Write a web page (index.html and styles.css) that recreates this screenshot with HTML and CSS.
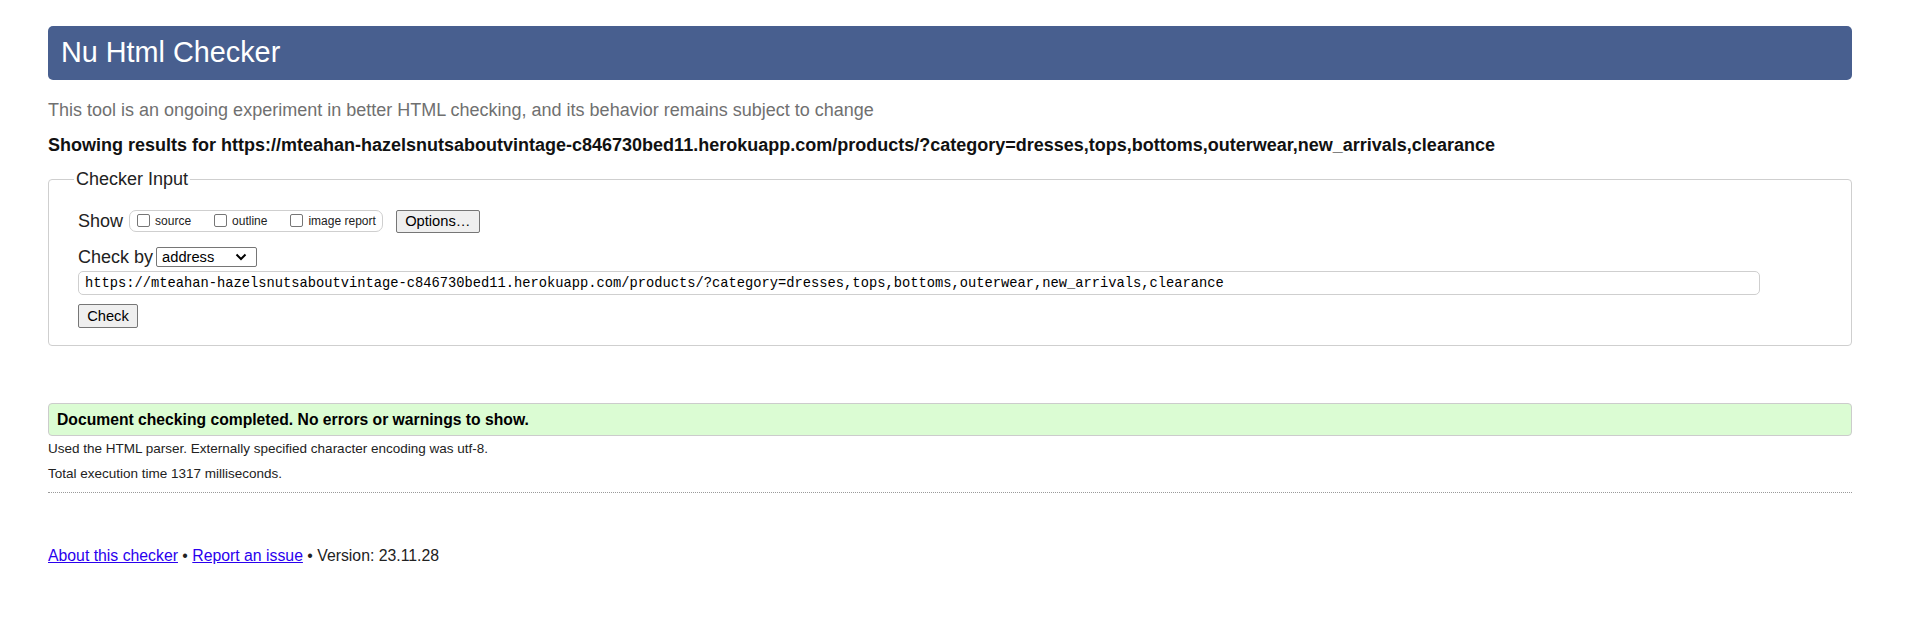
FILE: index.html
```html
<!DOCTYPE html>
<html lang="en">
<head>
<meta charset="utf-8">
<title>Nu Html Checker</title>
<link rel="stylesheet" href="styles.css">
</head>
<body>
<h1 class="title">Nu Html Checker</h1>
<p class="intro">This tool is an ongoing experiment in better HTML checking, and its behavior remains subject to change</p>
<p class="results">Showing results for https://mteahan-hazelsnutsaboutvintage-c846730bed11.herokuapp.com/products/?category=dresses,tops,bottoms,outerwear,new_arrivals,clearance</p>
<fieldset class="checker">
  <legend class="checker-legend">Checker Input</legend>
  <div class="show-row">
    <span class="row-label">Show</span>
    <div class="show-box">
      <label class="opt"><input type="checkbox" class="cb"><span>source</span></label>
      <label class="opt"><input type="checkbox" class="cb"><span>outline</span></label>
      <label class="opt"><input type="checkbox" class="cb"><span>image report</span></label>
    </div>
    <button type="button" class="btn btn-options">Options…</button>
  </div>
  <div class="by-row">
    <span class="row-label by-label">Check by</span>
    <span class="select-wrap">
      <select class="select"><option>address</option></select>
      <svg class="chev" width="12" height="8" viewBox="0 0 12 8"><path d="M1.5 1.5 L6 6 L10.5 1.5" fill="none" stroke="#000" stroke-width="2"/></svg>
    </span>
  </div>
  <input type="text" class="url" value="https://mteahan-hazelsnutsaboutvintage-c846730bed11.herokuapp.com/products/?category=dresses,tops,bottoms,outerwear,new_arrivals,clearance">
  <div class="check-row"><button type="button" class="btn btn-check">Check</button></div>
</fieldset>
<div class="success">Document checking completed. No errors or warnings to show.</div>
<p class="details">Used the HTML parser. Externally specified character encoding was utf-8.</p>
<p class="details">Total execution time 1317 milliseconds.</p>
<div class="rule"></div>
<p class="footer"><a href="#" class="link">About this checker</a> • <a href="#" class="link">Report an issue</a> • Version: 23.11.28</p>
</body>
</html>
```
FILE: styles.css
```css
html { background: #fff; }
body {
  margin: 0;
  padding: 26px 58px 0 48px;
  font-family: "Liberation Sans", Arial, sans-serif;
  color: #000;
}
.title {
  margin: 0;
  height: 54px;
  box-sizing: border-box;
  padding: 0 0 2px 13px;
  line-height: 52px;
  font-size: 28.8px;
  font-weight: normal;
  color: #fff;
  background: #485f8f;
  border-radius: 5px;
}
.intro {
  margin: 20px 0 0;
  font-size: 18px;
  line-height: 20px;
  color: #707070;
}
.results {
  margin: 15px 0 0;
  font-size: 18px;
  line-height: 20px;
  font-weight: bold;
  color: #111;
}
.checker {
  margin: 14px 0 0;
  padding: 20px 29px 17px 29px;
  border: 1px solid #cfcfcf;
  border-radius: 4px;
  min-width: 0;
}
.checker-legend {
  font-size: 18px;
  line-height: 20px;
  padding: 0 2px;
  margin-left: -4px;
  color: #222;
}
.show-row {
  display: flex;
  align-items: center;
  height: 24px;
}
.row-label {
  font-size: 18px;
  line-height: 20px;
  color: #222;
  margin-right: 6px;
}
.show-box {
  display: flex;
  align-items: center;
  height: 22px;
  box-sizing: border-box;
  border: 1px solid #cfcfcf;
  border-radius: 7px;
  padding: 0 6px 0 7px;
}
.opt {
  display: flex;
  align-items: center;
  font-size: 12px;
  color: #222;
  margin-right: 23px;
}
.opt:last-child { margin-right: 0; }
.cb {
  appearance: none;
  -webkit-appearance: none;
  margin: 0 5px 0 0;
  width: 13px;
  height: 13px;
  box-sizing: border-box;
  border: 1px solid #767676;
  border-radius: 2px;
  background: #fff;
  position: relative;
  top: -1px;
}
.btn {
  font-family: "Liberation Sans", Arial, sans-serif;
  font-size: 14.7px;
  color: #000;
  background: #efefef;
  border: 1px solid #767676;
  border-radius: 2px;
  padding: 0;
  box-sizing: border-box;
}
.btn-options {
  margin-left: 13px;
  width: 84px;
  height: 23px;
}
.by-row {
  display: flex;
  align-items: center;
  margin-top: 14px;
  height: 20px;
}
.by-label { margin-right: 3px; }
.select-wrap {
  position: relative;
  display: inline-block;
  height: 20px;
}
.select {
  appearance: none;
  -webkit-appearance: none;
  width: 101px;
  height: 20px;
  box-sizing: border-box;
  border: 1px solid #767676;
  border-radius: 2px;
  background: #fff;
  padding: 0 0 0 5px;
  margin: 0;
  font-family: "Liberation Sans", Arial, sans-serif;
  font-size: 14.7px;
  color: #000;
  display: block;
}
.chev {
  position: absolute;
  left: 79px;
  top: 6px;
  pointer-events: none;
}
.url {
  display: block;
  margin: 4px 0 0;
  width: 1682px;
  height: 24px;
  box-sizing: border-box;
  border: 1px solid #cfcfcf;
  border-radius: 5px;
  padding: 0 6px;
  font-family: "Liberation Mono", "DejaVu Sans Mono", monospace;
  font-size: 13.75px;
  color: #000;
  background: #fff;
}
.check-row { margin-top: 9px; height: 24px; }
.btn-check {
  width: 60px;
  height: 24px;
  display: block;
}
.success {
  margin-top: 57px;
  height: 33px;
  box-sizing: border-box;
  border: 1px solid #cccccc;
  border-radius: 4px;
  background: #dbfcd3;
  padding: 0 8px;
  line-height: 31px;
  font-size: 15.7px;
  font-weight: bold;
  color: #000;
}
.details {
  margin: 0;
  font-size: 13.5px;
  line-height: 25px;
  color: #222;
}
.rule {
  margin-top: 6px;
  border-top: 1px dotted #9a9a9a;
}
.footer {
  margin: 53px 0 0;
  font-size: 15.8px;
  line-height: 20px;
  color: #222;
}
.link { color: #2a00ee; }
```
